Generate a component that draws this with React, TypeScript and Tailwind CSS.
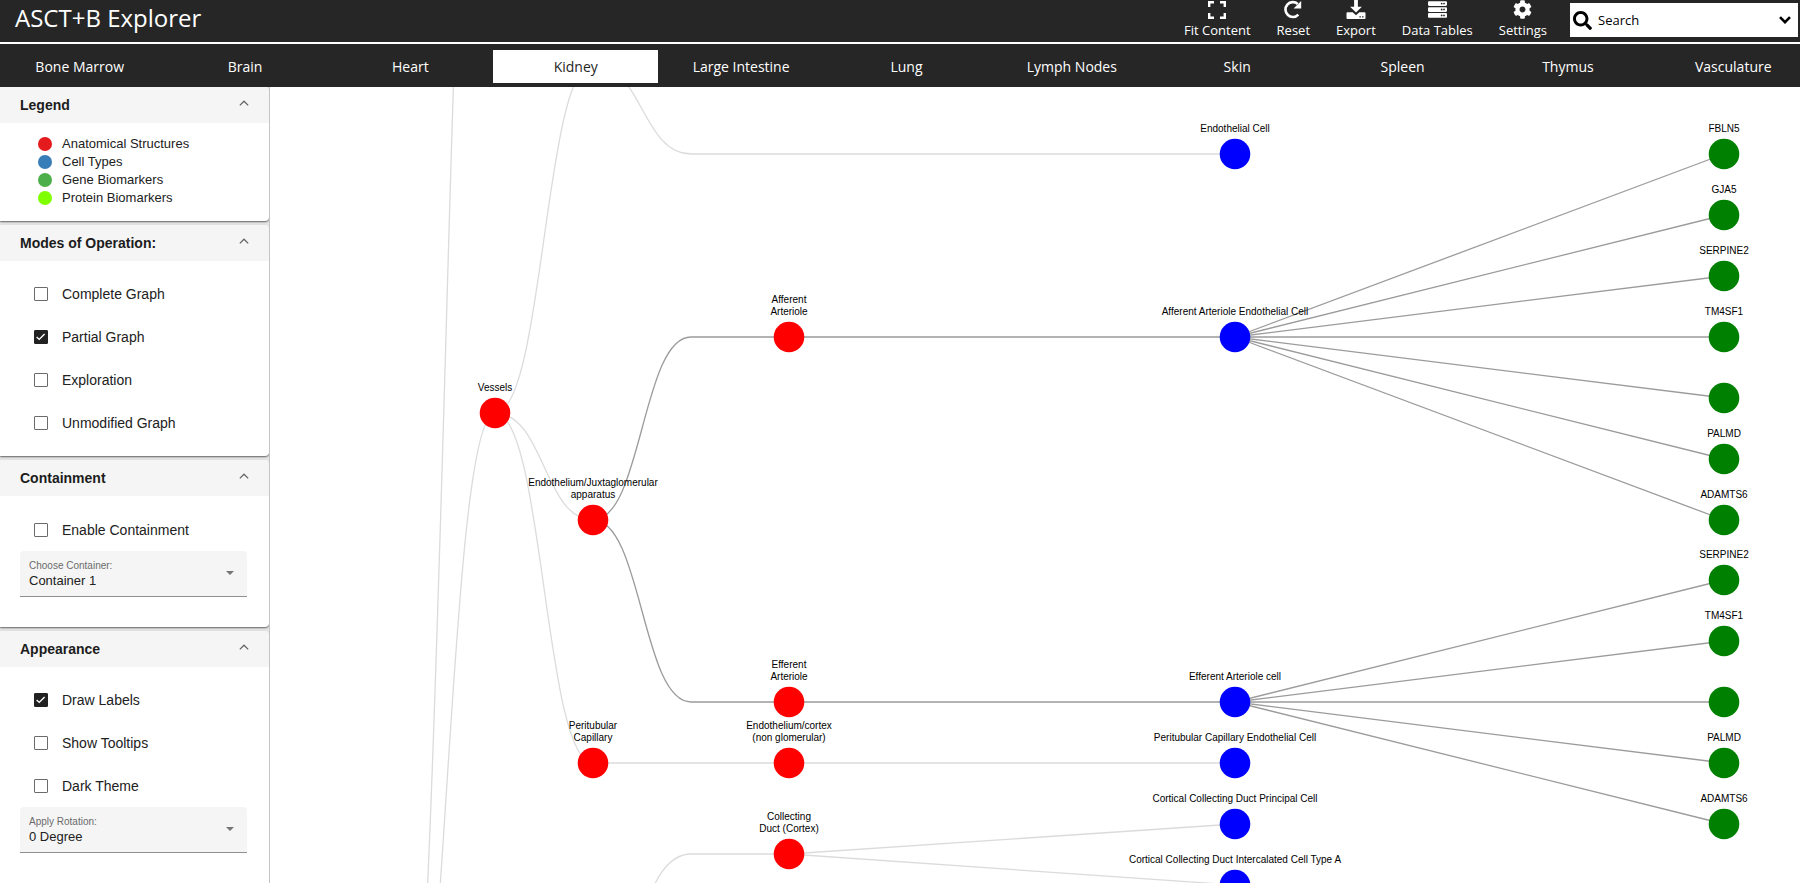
import { useState } from "react";
import { FaSearch, FaCog, FaServer } from "react-icons/fa";

const ORGANS = [
  "Bone Marrow", "Brain", "Heart", "Kidney", "Large Intestine", "Lung",
  "Lymph Nodes", "Skin", "Spleen", "Thymus", "Vasculature",
];

const LEGEND = [
  { label: "Anatomical Structures", dot: "bg-[#e41a1c]" },
  { label: "Cell Types", dot: "bg-[#377eb8]" },
  { label: "Gene Biomarkers", dot: "bg-[#4daf4a]" },
  { label: "Protein Biomarkers", dot: "bg-[#7fff00]" },
];

type GraphNode = { x: number; y: number; fill: string; lines: string[] };

// Column positions of the graph, relative to the canvas
const COL = { root: 128, vessel: 225, inner: 323, bend: 421, leaf: 519, cell: 965, marker: 1454 };
const RED = "#ff0000";
const BLUE = "#0000ff";
const GREEN = "#008000";
const LIGHT = "#dbdbdb";
const DARK = "#9b9b9b";

const MARKERS = [
  { y: 67, name: "FBLN5" },
  { y: 128, name: "GJA5" },
  { y: 189, name: "SERPINE2" },
  { y: 250, name: "TM4SF1" },
  { y: 311, name: "" },
  { y: 372, name: "PALMD" },
  { y: 433, name: "ADAMTS6" },
  { y: 493, name: "SERPINE2" },
  { y: 554, name: "TM4SF1" },
  { y: 615, name: "" },
  { y: 676, name: "PALMD" },
  { y: 737, name: "ADAMTS6" },
];

const NODES: GraphNode[] = [
  { x: COL.vessel, y: 326, fill: RED, lines: ["Vessels"] },
  { x: COL.inner, y: 433, fill: RED, lines: ["Endothelium/Juxtaglomerular", "apparatus"] },
  { x: COL.inner, y: 676, fill: RED, lines: ["Peritubular", "Capillary"] },
  { x: COL.leaf, y: 250, fill: RED, lines: ["Afferent", "Arteriole"] },
  { x: COL.leaf, y: 615, fill: RED, lines: ["Efferent", "Arteriole"] },
  { x: COL.leaf, y: 676, fill: RED, lines: ["Endothelium/cortex", "(non glomerular)"] },
  { x: COL.leaf, y: 767, fill: RED, lines: ["Collecting", "Duct (Cortex)"] },
  { x: COL.cell, y: 67, fill: BLUE, lines: ["Endothelial Cell"] },
  { x: COL.cell, y: 250, fill: BLUE, lines: ["Afferent Arteriole Endothelial Cell"] },
  { x: COL.cell, y: 615, fill: BLUE, lines: ["Efferent Arteriole cell"] },
  { x: COL.cell, y: 676, fill: BLUE, lines: ["Peritubular Capillary Endothelial Cell"] },
  { x: COL.cell, y: 737, fill: BLUE, lines: ["Cortical Collecting Duct Principal Cell"] },
  { x: COL.cell, y: 798, fill: BLUE, lines: ["Cortical Collecting Duct Intercalated Cell Type A"] },
  ...MARKERS.map((m) => ({ x: COL.marker, y: m.y, fill: GREEN, lines: m.name ? [m.name] : [] })),
];

function curve(x1: number, y1: number, x2: number, y2: number) {
  const mid = (x1 + x2) / 2;
  return `M${x1} ${y1}C${mid} ${y1} ${mid} ${y2} ${x2} ${y2}`;
}

const LINKS: { d: string; stroke: string }[] = [
  { d: curve(COL.root, 1081, COL.vessel, -619), stroke: LIGHT },
  { d: curve(COL.root, 1081, COL.vessel, 326), stroke: LIGHT },
  { d: curve(COL.vessel, 326, COL.inner, -23), stroke: LIGHT },
  { d: curve(COL.vessel, 326, COL.inner, 433), stroke: LIGHT },
  { d: curve(COL.vessel, 326, COL.inner, 676), stroke: LIGHT },
  { d: `${curve(COL.inner, -23, COL.bend, 67)}H${COL.cell}`, stroke: LIGHT },
  { d: `M${COL.inner} 676H${COL.cell}`, stroke: LIGHT },
  { d: `${curve(COL.inner, 882, COL.bend, 767)}H${COL.leaf}`, stroke: LIGHT },
  { d: `M${COL.leaf} 767L${COL.cell} 737`, stroke: LIGHT },
  { d: `M${COL.leaf} 767L${COL.cell} 798`, stroke: LIGHT },
  { d: `${curve(COL.inner, 433, COL.bend, 250)}H${COL.cell}`, stroke: DARK },
  { d: `${curve(COL.inner, 433, COL.bend, 615)}H${COL.cell}`, stroke: DARK },
  ...MARKERS.map((m, i) => ({
    d: `M${COL.cell} ${i < 7 ? 250 : 615}L${COL.marker} ${m.y}`,
    stroke: DARK,
  })),
];

function Graph() {
  return (
    <svg className="block h-full w-full" role="img" aria-label="Kidney graph">
      {LINKS.map((l, i) => (
        <path key={i} d={l.d} fill="none" stroke={l.stroke} strokeWidth={1.3} />
      ))}
      {NODES.map((n, i) => (
        <g key={i}>
          <circle cx={n.x} cy={n.y} r={15.3} fill={n.fill} />
          {n.lines.map((t, k) => (
            <text
              key={t}
              x={n.x}
              y={n.y - 22 - (n.lines.length - 1 - k) * 12}
              textAnchor="middle"
              fontSize={10}
              fill="#000"
            >
              {t}
            </text>
          ))}
        </g>
      ))}
    </svg>
  );
}

function Panel({ title, pad, children }: { title: string; pad: string; children: React.ReactNode }) {
  return (
    <section className="shrink-0 rounded-r bg-white shadow-[0_1px_2px_rgba(0,0,0,0.6)]">
      <button type="button" className="flex h-9 w-full items-center justify-between rounded-tr bg-[#f5f5f5] px-5 text-left">
        <h2 className="text-sm font-bold text-[#1c1c1c]">{title}</h2>
        <svg width="10" height="6" viewBox="0 0 10 6" className="mb-1" aria-hidden="true">
          <path d="M.8 5.4 5 1.2l4.2 4.2" fill="none" stroke="#666" strokeWidth="1.3" />
        </svg>
      </button>
      <div className={pad}>{children}</div>
    </section>
  );
}

function Check({ label, initial = false }: { label: string; initial?: boolean }) {
  const [on, setOn] = useState(initial);
  return (
    <label className="flex h-[43px] items-center gap-[14px] pl-[14px] text-sm text-[#212121]">
      <span className="relative flex size-[14px]">
        <input
          type="checkbox"
          checked={on}
          onChange={() => setOn(!on)}
          className="size-[14px] appearance-none rounded-[1px] border border-[#6b6b6b] bg-white checked:border-[#212121] checked:bg-[#212121]"
        />
        {on && (
          <svg viewBox="0 0 14 14" className="pointer-events-none absolute inset-0" aria-hidden="true">
            <path d="M2.6 7 5.2 9.4 10.600 3.9" fill="none" stroke="#fff" strokeWidth="1.4" />
          </svg>
        )}
      </span>
      {label}
    </label>
  );
}

function Picker({ id, label, options }: { id: string; label: string; options: string[] }) {
  return (
    <div className="relative mr-[2px] flex h-[46px] flex-col rounded-t border-b border-[#8f8f8f] bg-[#f5f5f5] pt-[7px]">
      <label htmlFor={id} className="px-[9px] text-[10px] leading-[15px] text-[#6b6b6b]">{label}</label>
      <select id={id} className="w-full appearance-none bg-transparent px-[9px] text-[13px] leading-4 text-[#212121]">
        {options.map((o) => <option key={o}>{o}</option>)}
      </select>
      <svg width="8" height="4" viewBox="0 0 8 4" className="pointer-events-none absolute right-[13px] top-5" aria-hidden="true">
        <path d="M0 0h8L4 4z" fill="#757575" />
      </svg>
    </div>
  );
}

const toolClass = "flex flex-col items-center justify-end gap-[2px] text-[13px] leading-[18px] text-white";

export default function App() {
  const [organ, setOrgan] = useState("Kidney");
  return (
    <div className="flex h-screen flex-col overflow-hidden bg-white font-['Liberation_Sans',Arial,sans-serif]">
      <header className="flex h-[42px] shrink-0 items-center bg-[#262626] font-['Open_Sans',sans-serif]">
        <h1 className="pb-[6px] pl-[15px] text-2xl leading-8 text-white">ASCT+B Explorer</h1>
        <div className="ml-auto flex h-full gap-[26px] pb-[3px]">
          <button type="button" className={toolClass}>
            <svg width="18" height="18" viewBox="0 0 18 18" fill="none" stroke="#fff" strokeWidth="2.4" aria-hidden="true">
              <path d="M1.2 6V1.2H6M12 1.2h4.8V6M16.8 12v4.8H12M6 16.8H1.2V12" />
            </svg>
            Fit Content
          </button>
          <button type="button" className={toolClass}>
            <svg width="20" height="19" viewBox="0 0 20 20" fill="none" aria-hidden="true">
              <path d="M15.6 15.4A7.8 7.8 0 1 1 15 4.2" stroke="#fff" strokeWidth="2.8" />
              <path d="M18.6 1v8h-8z" fill="#fff" />
            </svg>
            Reset
          </button>
          <button type="button" className={toolClass}>
            <svg width="20" height="19" viewBox="0 0 20 20" fill="#fff" aria-hidden="true">
              <path d="M8 0h4v7h4.2L10 13.2 3.8 7H8z" />
              <path fillRule="evenodd" d="M1 13h5.5L10 16l3.5-3H19a1 1 0 0 1 1 1v5a1 1 0 0 1-1 1H1a1 1 0 0 1-1-1v-5a1 1 0 0 1 1-1zm12.6 4v1.5h1.5V17zm2.8 0v1.5h1.5V17z" />
            </svg>
            Export
          </button>
          <button type="button" className={toolClass}>
            <FaServer size={19} />
            Data Tables
          </button>
          <button type="button" className={toolClass}>
            <FaCog size={19} />
            Settings
          </button>
        </div>
        <div className="mb-[2px] ml-[23px] mr-[2px] flex h-[34px] w-[228px] items-center gap-[6px] bg-white pl-[3px] pr-[7px]">
          <FaSearch size={19} className="text-black" />
          <input
            aria-label="Search"
            placeholder="Search"
            className="min-w-0 flex-1 bg-transparent pt-px text-[13px] text-black outline-none placeholder:text-black"
          />
          <svg width="12" height="8" viewBox="0 0 12 8" aria-hidden="true">
            <path d="M1 1.2 6 6.2l5-5" fill="none" stroke="#000" strokeWidth="2.6" />
          </svg>
        </div>
      </header>
      <nav className="flex h-[45px] shrink-0 overflow-hidden border-t-2 border-white bg-[#262626] font-['Open_Sans',sans-serif]">
        <div className="-ml-[3px] -mr-4 flex flex-1 pb-[4px] pt-[6px]">
          {ORGANS.map((o) => (
            <button
              key={o}
              type="button"
              onClick={() => setOrgan(o)}
              className={`min-w-0 flex-1 text-sm ${o === organ ? "bg-white text-[#262626]" : "text-white"}`}
            >
              {o}
            </button>
          ))}
        </div>
      </nav>
      <main className="flex min-h-0 flex-1">
        <aside className="flex w-[270px] shrink-0 flex-col gap-1 overflow-hidden border-r border-[#c4c4c4] bg-[#e8e8e8]">
          <Panel title="Legend" pad="pb-[14px] pl-[38px] pt-[12px]">
            <ul>
              {LEGEND.map((l) => (
                <li key={l.label} className="flex h-[18px] items-center gap-[10px] text-[13px] text-[#212121]">
                  <span className={`size-[14px] rounded-full ${l.dot}`} />
                  {l.label}
                </li>
              ))}
            </ul>
          </Panel>
          <Panel title="Modes of Operation:" pad="px-5 pb-[12px] pt-[11px]">
            <Check label="Complete Graph" />
            <Check label="Partial Graph" initial />
            <Check label="Exploration" />
            <Check label="Unmodified Graph" />
          </Panel>
          <Panel title="Containment" pad="px-5 pb-[30px] pt-[12px]">
            <Check label="Enable Containment" />
            <Picker id="container" label="Choose Container:" options={["Container 1", "Container 2"]} />
          </Panel>
          <Panel title="Appearance" pad="px-5 pb-[60px] pt-[11px]">
            <Check label="Draw Labels" initial />
            <Check label="Show Tooltips" />
            <Check label="Dark Theme" />
            <Picker id="rotation" label="Apply Rotation:" options={["0 Degree", "90 Degree"]} />
          </Panel>
        </aside>
        <div className="min-w-0 flex-1 overflow-hidden">
          <Graph />
        </div>
      </main>
    </div>
  );
}
